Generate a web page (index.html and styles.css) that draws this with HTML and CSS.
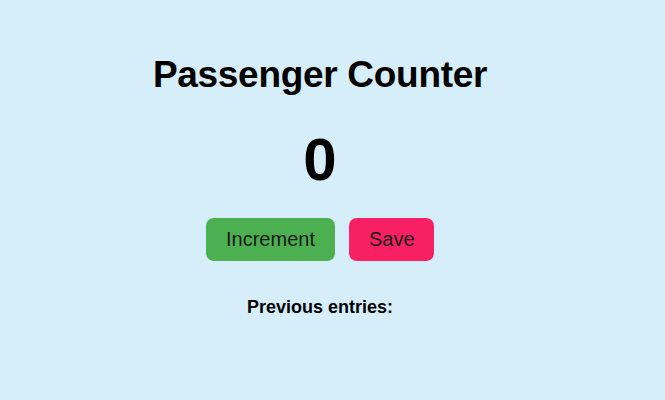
FILE: index.html
```html
<!DOCTYPE html>
<html>
<head>
<meta charset="utf-8">
<link rel="stylesheet" href="styles.css">
</head>
<body>
<main class="app">
  <h1 class="title">Passenger Counter</h1>
  <h2 class="count">0</h2>
  <div class="actions">
    <button class="btn btn-inc">Increment</button>
    <button class="btn btn-save">Save</button>
  </div>
  <p class="prev">Previous entries:</p>
</main>
</body>
</html>
```
FILE: styles.css
```css
html, body {
  margin: 0;
  padding: 0;
}
body {
  background: #d5eef9;
  font-family: "Liberation Sans", Arial, sans-serif;
  color: #000;
  height: 400px;
}
.app {
  width: 640px;
  display: flex;
  flex-direction: column;
  align-items: center;
  text-align: center;
}
.title {
  margin: 52px 0 0;
  font-size: 37px;
  line-height: 46px;
  letter-spacing: -0.3px;
  font-weight: bold;
}
.count {
  margin: 32px 0 0;
  font-size: 60px;
  line-height: 60px;
  font-weight: bold;
}
.actions {
  margin-top: 28px;
  display: flex;
  gap: 14px;
}
.btn {
  font-family: "Liberation Sans", Arial, sans-serif;
  font-size: 20px;
  color: #1a1a1a;
  border: none;
  border-radius: 8px;
  height: 43px;
  padding: 0 20px;
}
.btn-inc {
  background: #4caf50;
  width: 129px;
}
.btn-save {
  background: #f72062;
  width: 85px;
}
.prev {
  margin: 36px 0 0;
  font-size: 18px;
  font-weight: bold;
}
```
